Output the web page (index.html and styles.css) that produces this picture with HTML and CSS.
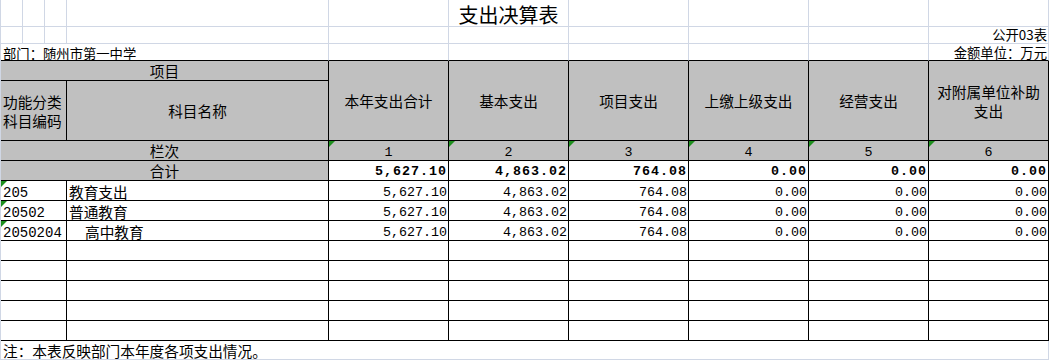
FILE: index.html
```html
<!DOCTYPE html>
<html lang="zh-CN">
<head>
<meta charset="utf-8">
<title>支出决算表</title>
<link rel="stylesheet" href="styles.css">
</head>
<body>
<div class="sheet">
  <!-- row 1 -->
  <div class="c"></div><div class="c"></div><div class="c"></div><div class="c"></div><div class="c"></div>
  <div class="c title">支出决算表</div>
  <div class="c"></div><div class="c"></div><div class="c"></div><div class="c"></div>
  <!-- row 2 -->
  <div class="c"></div><div class="c"></div><div class="c"></div><div class="c"></div><div class="c"></div>
  <div class="c"></div><div class="c"></div><div class="c"></div><div class="c"></div>
  <div class="c small right">公开03表</div>
  <!-- row 3 -->
  <div class="c edge small s4 dept">部门：随州市第一中学</div>
  <div class="c edge"></div><div class="c edge"></div><div class="c edge"></div><div class="c edge"></div><div class="c edge"></div>
  <div class="c edge small right unit">金额单位：万元</div>

  <!-- header -->
  <div class="c t h s4 center">项目</div>
  <div class="c t h r2 center">本年支出合计</div>
  <div class="c t h r2 center">基本支出</div>
  <div class="c t h r2 center">项目支出</div>
  <div class="c t h r2 center">上缴上级支出</div>
  <div class="c t h r2 center">经营支出</div>
  <div class="c t h r2 center wrap">对附属单位补助<br>支出</div>
  <div class="c t h s3 wrap left">功能分类<br>科目编码</div>
  <div class="c t h center">科目名称</div>

  <div class="c t h s4 center">栏次</div>
  <div class="c t h center num idx tri">1</div>
  <div class="c t h center num idx tri">2</div>
  <div class="c t h center num idx tri">3</div>
  <div class="c t h center num idx tri">4</div>
  <div class="c t h center num idx tri">5</div>
  <div class="c t h center num idx tri">6</div>

  <div class="c t h s4 center">合计</div>
  <div class="c t right num bold">5,627.10</div>
  <div class="c t right num bold">4,863.02</div>
  <div class="c t right num bold">764.08</div>
  <div class="c t right num bold">0.00</div>
  <div class="c t right num bold">0.00</div>
  <div class="c t right num bold">0.00</div>

  <!-- data rows -->
  <div class="c t s3 code tri">205</div>
  <div class="c t name">教育支出</div>
  <div class="c t right num">5,627.10</div>
  <div class="c t right num">4,863.02</div>
  <div class="c t right num">764.08</div>
  <div class="c t right num">0.00</div>
  <div class="c t right num">0.00</div>
  <div class="c t right num">0.00</div>

  <div class="c t s3 code tri">20502</div>
  <div class="c t name">普通教育</div>
  <div class="c t right num">5,627.10</div>
  <div class="c t right num">4,863.02</div>
  <div class="c t right num">764.08</div>
  <div class="c t right num">0.00</div>
  <div class="c t right num">0.00</div>
  <div class="c t right num">0.00</div>

  <div class="c t s3 code tri">2050204</div>
  <div class="c t name indent">高中教育</div>
  <div class="c t right num">5,627.10</div>
  <div class="c t right num">4,863.02</div>
  <div class="c t right num">764.08</div>
  <div class="c t right num">0.00</div>
  <div class="c t right num">0.00</div>
  <div class="c t right num">0.00</div>

  <!-- blank rows -->
  <div class="c t s3"></div><div class="c t"></div><div class="c t"></div><div class="c t"></div><div class="c t"></div><div class="c t"></div><div class="c t"></div><div class="c t"></div>
  <div class="c t s3"></div><div class="c t"></div><div class="c t"></div><div class="c t"></div><div class="c t"></div><div class="c t"></div><div class="c t"></div><div class="c t"></div>
  <div class="c t s3"></div><div class="c t"></div><div class="c t"></div><div class="c t"></div><div class="c t"></div><div class="c t"></div><div class="c t"></div><div class="c t"></div>
  <div class="c t s3"></div><div class="c t"></div><div class="c t"></div><div class="c t"></div><div class="c t"></div><div class="c t"></div><div class="c t"></div><div class="c t"></div>
  <div class="c t s3"></div><div class="c t"></div><div class="c t"></div><div class="c t"></div><div class="c t"></div><div class="c t"></div><div class="c t"></div><div class="c t"></div>

  <!-- footer -->
  <div class="c s10 note">注：本表反映部门本年度各项支出情况。</div>
</div>
</body>
</html>
```

FILE: styles.css
```css
* {
  box-sizing: border-box;
  margin: 0;
  padding: 0;
}

body {
  margin: 0;
  background: #ffffff;
  color: #000000;
  font-family: "Noto Sans CJK SC", "Noto Sans", sans-serif;
}

.sheet {
  display: grid;
  width: 1049px;
  grid-template-columns: 22px 22px 22px 262px repeat(6, 120px);
  grid-template-rows: 27px 17px 17px 20px 60px 20px 20px repeat(8, 20px) 19px;
  border-left: 1px solid #d0d7e5;
}

.c {
  position: relative;
  display: flex;
  align-items: center;
  min-width: 0;
  white-space: nowrap;
  border-right: 1px solid #d0d7e5;
  border-bottom: 1px solid #d0d7e5;
  font-size: 14.67px;
  line-height: 18px;
}

.s3 { grid-column: span 3; }
.s4 { grid-column: span 4; }
.s10 { grid-column: span 10; }
.r2 { grid-row: span 2; }

.edge { border-bottom-color: #000000; }

.t {
  border-right-color: #000000;
  border-bottom-color: #000000;
}

.h { background: #c0c0c0; }

.center { justify-content: center; text-align: center; }
.right { justify-content: flex-end; padding-right: 1px; }
.left { justify-content: flex-start; padding-left: 2px; }

.wrap {
  white-space: normal;
  line-height: 19px;
}

.title {
  justify-content: center;
  font-size: 20px;
  padding-top: 4px;
}

.small { font-size: 13.33px; }

.dept { padding-left: 2px; padding-top: 3px; }
.unit { padding-top: 2px; }

.name { padding-left: 2px; padding-top: 3px; }
.name.indent { padding-left: 18px; }

.num {
  font-family: "Liberation Mono", monospace;
  font-size: 13.33px;
  padding-top: 4px;
}

.idx { padding-top: 4px; }

.bold {
  font-weight: bold;
  letter-spacing: 1px;
  padding-top: 3px;
}

.code {
  font-family: "Liberation Mono", monospace;
  font-size: 14px;
  padding-left: 2px;
  padding-top: 5px;
}

.note {
  font-size: 14.67px;
  padding-left: 2px;
  padding-top: 1px;
}

.tri::before {
  content: "";
  position: absolute;
  top: 0;
  left: 0;
  border-top: 6px solid #1f8f1f;
  border-right: 6px solid transparent;
}
```
